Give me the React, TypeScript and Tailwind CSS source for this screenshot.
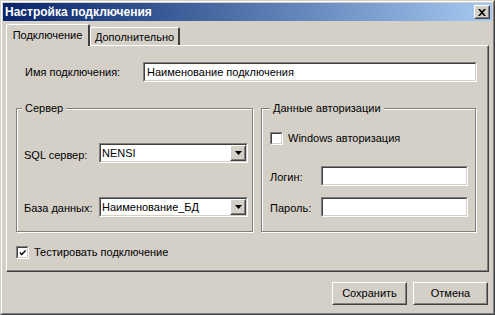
import React from 'react';

const font = { fontFamily: '"Liberation Sans", Arial, sans-serif' };

function Sunken({ className = '', children }: { className?: string; children?: React.ReactNode }) {
  return (
    <div className={`border border-t-[#808080] border-l-[#808080] border-b-white border-r-white ${className}`}>
      <div className="h-full border border-t-[#404040] border-l-[#404040] border-b-[#d4d0c8] border-r-[#d4d0c8] bg-white flex items-center">
        {children}
      </div>
    </div>
  );
}

function Raised({ className = '', children }: { className?: string; children?: React.ReactNode }) {
  return (
    <div className={`border border-t-white border-l-white border-b-[#404040] border-r-[#404040] bg-[#d4d0c8] ${className}`}>
      <div className="h-full border border-t-[#d4d0c8] border-l-[#d4d0c8] border-b-[#808080] border-r-[#808080] flex items-center justify-center">
        {children}
      </div>
    </div>
  );
}

function TextBox({ value = '', className = '' }: { value?: string; className?: string }) {
  return (
    <Sunken className={`h-[20px] ${className}`}>
      <span className="pl-[2px] text-[11px] leading-[13px] text-black whitespace-nowrap">{value}</span>
    </Sunken>
  );
}

function Combo({ value }: { value: string }) {
  return (
    <Sunken className="h-[20px] w-[149px]">
      <span className="flex-1 pl-[1px] text-[11px] leading-[13px] text-black whitespace-nowrap">{value}</span>
      <Raised className="w-[16px] h-[16px]">
        <svg width="7" height="4" viewBox="0 0 7 4">
          <path d="M0 0h7L3.5 4z" fill="#000" />
        </svg>
      </Raised>
    </Sunken>
  );
}

function Check({ checked, label }: { checked?: boolean; label: string }) {
  return (
    <div className="flex items-center">
      <Sunken className="w-[13px] h-[13px]">
        {checked && (
          <svg width="9" height="9" viewBox="0 0 9 9" className="ml-px">
            <path d="M1 3.5l2 2 4.5-4.5v2.5L3 8 1 6z" fill="#000" />
          </svg>
        )}
      </Sunken>
      <span className="text-[11px] leading-[13px] text-black ml-[5px]">{label}</span>
    </div>
  );
}

function Group({ title, className = '', children }: { title: string; className?: string; children?: React.ReactNode }) {
  return (
    <div className={`relative border border-[#808080] shadow-[inset_1px_1px_0_#fff,1px_1px_0_#fff] ${className}`}>
      <span className={`absolute top-[-7px] ${title === 'Сервер' ? 'left-[5px]' : 'left-[8px]'} px-[3px] bg-[#d4d0c8] text-[11px] leading-[13px] text-black`}>
        {title}
      </span>
      {children}
    </div>
  );
}

export default function App() {
  return (
    <div style={font} className="w-[495px] h-[315px] bg-[#d4d0c8] border border-t-[#d4d0c8] border-l-[#d4d0c8] border-b-[#404040] border-r-[#404040] select-none">
      <div className="h-full border border-t-white border-l-white border-b-[#808080] border-r-[#808080] p-px flex flex-col">
        {/* title bar */}
        <div className="h-[18px] flex items-center justify-between bg-gradient-to-r from-[#0a246a] to-[#a6caf0] pl-[2px] pr-[2px]">
          <span className="text-white font-bold text-[12px] leading-[14px]">Настройка подключения</span>
          <Raised className="w-[16px] h-[14px]">
            <svg width="8" height="7" viewBox="0 0 8 7">
              <path d="M0 0h2l2 2.2L6 0h2L5 3.5 8 7H6L4 4.8 2 7H0l3-3.5z" fill="#000" />
            </svg>
          </Raised>
        </div>

        <div className="px-[3px] flex flex-col">
          {/* tabs */}
          <div className="mt-[3px] h-[21px] flex items-end">
            <div className="relative z-10 -mb-px w-[84px] h-[22px] bg-[#d4d0c8] border-t border-l border-white border-r-2 border-r-[#404040] rounded-t-[2px] flex justify-center pt-[4px]">
              <span className="text-[11px] leading-[13px] text-black">Подключение</span>
            </div>
            <div className="w-[90px] h-[18px] border-t border-l border-white border-r-2 border-r-[#404040] rounded-t-[2px] flex justify-center pt-[3px]">
              <span className="text-[11px] leading-[13px] text-black">Дополнительно</span>
            </div>
          </div>

          {/* panel */}
          <div className="h-[227px] border-t border-l border-white border-r border-b border-r-[#404040] border-b-[#404040]">
            <div className="h-full border-r border-b border-[#808080] flex flex-col">
              <div className="mt-[16px] pl-[18px] flex items-center">
                <span className="w-[118px] text-[11px] leading-[13px] text-black">Имя подключения:</span>
                <TextBox className="w-[334px]" value="Наименование подключения" />
              </div>

              <div className="mt-[26px] ml-[9px] flex gap-[8px]">
                <Group title="Сервер" className="w-[237px] h-[124px]">
                  <div className="mt-[34px] pl-[7px] flex items-center">
                    <span className="w-[75px] pt-[5px] text-[11px] leading-[13px] text-black">SQL сервер:</span>
                    <Combo value="NENSI" />
                  </div>
                  <div className="mt-[34px] pl-[7px] flex items-center">
                    <span className="w-[75px] pt-[2px] text-[11px] leading-[13px] text-black">База данных:</span>
                    <Combo value="Наименование_БД" />
                  </div>
                </Group>
                <Group title="Данные авторизации" className="w-[215px] h-[124px]">
                  <div className="mt-[23px] pl-[8px]">
                    <Check label="Windows авторизация" />
                  </div>
                  <div className="mt-[21px] pl-[8px] flex items-center">
                    <span className="w-[51px] pt-[2px] text-[11px] leading-[13px] text-black">Логин:</span>
                    <TextBox className="w-[147px]" />
                  </div>
                  <div className="mt-[11px] pl-[8px] flex items-center">
                    <span className="w-[51px] pt-[2px] text-[11px] leading-[13px] text-black">Пароль:</span>
                    <TextBox className="w-[147px]" />
                  </div>
                </Group>
              </div>

              <div className="mt-[14px] ml-[9px]">
                <Check checked label="Тестировать подключение" />
              </div>
            </div>
          </div>

          {/* buttons */}
          <div className="mt-[10px] mr-[1px] flex justify-end gap-[6px]">
            <Raised className="w-[75px] h-[23px]">
              <span className="text-[11px] leading-[13px] text-black">Сохранить</span>
            </Raised>
            <Raised className="w-[75px] h-[23px]">
              <span className="text-[11px] leading-[13px] text-black">Отмена</span>
            </Raised>
          </div>
        </div>
      </div>
    </div>
  );
}
